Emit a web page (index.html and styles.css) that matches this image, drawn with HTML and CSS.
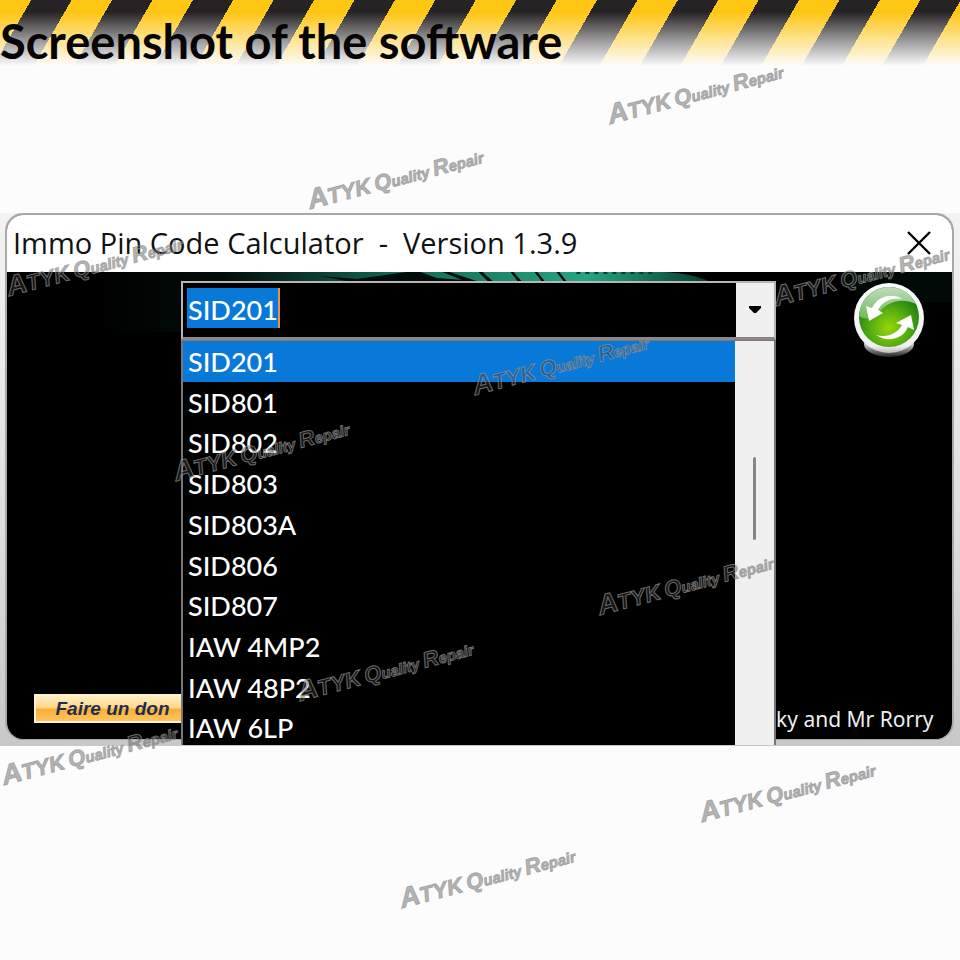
FILE: index.html
```html
<!DOCTYPE html>
<html lang="en">
<head>
<meta charset="utf-8">
<title>Immo Pin Code Calculator</title>
<link rel="stylesheet" href="styles.css">
</head>
<body>
<header class="banner">
  <h1>Screenshot of the software</h1>
</header>
<main class="desktop">
  <section class="window">
    <div class="titlebar">
      <h2>Immo Pin Code Calculator&nbsp; -&nbsp; Version 1.3.9</h2>
      <button class="close" aria-label="Close">
        <svg viewBox="0 0 24 24" width="24" height="24"><path d="M1 1 23 23M23 1 1 23" stroke="#000" stroke-width="2.4" fill="none"/></svg>
      </button>
    </div>
    <div class="client">
      <svg class="glow" viewBox="0 0 946 60" preserveAspectRatio="none" aria-hidden="true">
        <defs>
          <linearGradient id="teal"><stop offset="0" stop-color="#020c0a"/><stop offset=".35" stop-color="#126350"/><stop offset=".75" stop-color="#25a684"/><stop offset="1" stop-color="#063b2e"/></linearGradient>
          <linearGradient id="dim"><stop offset="0" stop-color="#000"/><stop offset=".7" stop-color="#020f0c"/><stop offset="1" stop-color="#010806"/></linearGradient>
        </defs>
        <path d="M90 0H300V60H90Z" fill="url(#dim)"/>
        <path d="M830 0H946V30H860Z" fill="#020a08"/>
        <path d="M215 0H655Q685 1 702 9H215Z" fill="url(#teal)"/>
        <path d="M313 4 350 7 400 0H414L430 6 470 9H340ZM443 0 470 9H458L436 0ZM476 0 486 9H481L472 0ZM507 0 515 9H511L504 0ZM531 0 538 9H535L528 0ZM553 0 560 9H557L550 0Z" fill="#010b09"/>
        <path d="M570 1H650" stroke="#063a2d" stroke-width="2" stroke-dasharray="4 5"/>
      </svg>
      <div class="side side-left">
        <button class="donate">Faire un don</button>
      </div>
      <div class="combo">
        <div class="field">
          <input class="value" type="text" value="SID201" aria-label="Control unit">
          <button class="arrow" aria-label="Show list">
            <svg viewBox="0 0 12 8" width="12" height="8"><path d="M0 0H12V2L7 7H5L0 2Z" fill="#000"/></svg>
          </button>
        </div>
        <div class="popup">
          <ul class="options" role="listbox" aria-label="Control units">
            <li role="option" aria-selected="true">SID201</li>
            <li role="option">SID801</li>
            <li role="option">SID802</li>
            <li role="option">SID803</li>
            <li role="option">SID803A</li>
            <li role="option">SID806</li>
            <li role="option">SID807</li>
            <li role="option">IAW 4MP2</li>
            <li role="option">IAW 48P2</li>
            <li role="option">IAW 6LP</li>
          </ul>
          <div class="track"><div class="thumb"></div></div>
        </div>
      </div>
      <div class="side side-right">
        <button class="refresh" aria-label="Refresh">
          <svg viewBox="0 0 74 78" width="74" height="78">
            <defs>
              <radialGradient id="ball" cx=".5" cy=".68" r=".62"><stop offset="0" stop-color="#9ad60a"/><stop offset=".5" stop-color="#55ae10"/><stop offset="1" stop-color="#187a12"/></radialGradient>
              <linearGradient id="gloss" x2="0" y2="1"><stop offset="0" stop-color="#c3dcc0"/><stop offset="1" stop-color="#6dbb55"/></linearGradient>
              <linearGradient id="rim" x2="0" y2="1"><stop offset="0" stop-color="#fff"/><stop offset=".9" stop-color="#f0f0f0"/><stop offset="1" stop-color="#bbb"/></linearGradient>
              <linearGradient id="base" x2="0" y2="1"><stop offset=".5" stop-color="#ccc"/><stop offset="1" stop-color="#222"/></linearGradient>
            </defs>
            <ellipse cx="37" cy="63" rx="25" ry="13" fill="url(#base)"/>
            <circle cx="37" cy="37" r="35" fill="url(#rim)"/>
            <circle cx="37" cy="36" r="30" fill="url(#ball)"/>
            <path d="M7 35A30 30 0 0 1 64 23C49 16 36 21 28 30 21 37 14 40 7 35Z" fill="url(#gloss)"/>
            <path d="M50 18C39 11 25 16 20 27L14 25 17 40 31 32 26 29C31 20 40 16 50 18Z" fill="#fff"/>
            <path d="M24 54C36 62 51 58 56 46L62 49 59 34 44 42 50 44C45 53 35 57 24 54Z" fill="#fff"/>
          </svg>
        </button>
        <p class="credit">ky and Mr Rorry</p>
      </div>
    </div>
  </section>
</main>
<div class="marks" aria-hidden="true">
  <p class="mark m1"><b>A</b><i>TYK</i> <i>Q</i>uality <i>R</i>epair</p>
  <p class="mark m2"><b>A</b><i>TYK</i> <i>Q</i>uality <i>R</i>epair</p>
  <p class="mark m3"><b>A</b><i>TYK</i> <i>Q</i>uality <i>R</i>epair</p>
  <p class="mark m4"><b>A</b><i>TYK</i> <i>Q</i>uality <i>R</i>epair</p>
  <p class="mark m5"><b>A</b><i>TYK</i> <i>Q</i>uality <i>R</i>epair</p>
  <p class="mark m6"><b>A</b><i>TYK</i> <i>Q</i>uality <i>R</i>epair</p>
  <p class="mark m7"><b>A</b><i>TYK</i> <i>Q</i>uality <i>R</i>epair</p>
  <p class="mark m8"><b>A</b><i>TYK</i> <i>Q</i>uality <i>R</i>epair</p>
  <p class="mark m9"><b>A</b><i>TYK</i> <i>Q</i>uality <i>R</i>epair</p>
  <p class="mark m10"><b>A</b><i>TYK</i> <i>Q</i>uality <i>R</i>epair</p>
  <p class="mark m11"><b>A</b><i>TYK</i> <i>Q</i>uality <i>R</i>epair</p>
</div>
</body>
</html>
```
FILE: styles.css
```css
* { box-sizing: border-box; }
body {
  margin: 0;
  min-height: 100vh;
  position: relative;
  overflow-x: hidden;
  background: #fdfcfd;
  font-family: "Open Sans", "Noto Sans", sans-serif;
}
h1, h2, p, ul { margin: 0; padding: 0; font-weight: 400; }
button { border: 0; padding: 0; background: none; display: block; }
svg { display: block; }

.banner {
  height: 213px;
  padding-top: 11px;
  background:
    linear-gradient(to bottom, rgba(253,252,253,0) 12px, rgba(253,252,253,.5) 38px, #fdfcfd 66px),
    repeating-linear-gradient(120deg, #ffc613 0 27px, #252324 27px 62px, #ffc613 62px 70px);
}
h1 {
  font: 700 47px/60px Lato, sans-serif;
  color: #060405;
  white-space: nowrap;
}

.desktop {
  padding: 0 6px 6px 5px;
  background: linear-gradient(to bottom, #f3f3f3, #dedede 60%, #c9c8c9);
}
.window {
  border: 2px solid #aaa8a9;
  border-bottom-width: 1px;
  border-radius: 18px;
  background: #000;
}
.titlebar {
  height: 57px;
  padding: 0 21px 2px 6px;
  display: flex;
  align-items: center;
  justify-content: space-between;
  background: #fff;
  border-radius: 16px 16px 0 0;
}
h2 { font-size: 29px; line-height: 36px; color: #111; white-space: nowrap; }
.client {
  position: relative;
  height: 467px;
  padding-top: 9px;
  display: grid;
  grid-template-columns: 174px 1fr 176px;
}
.glow { position: absolute; top: 0; left: 0; width: 100%; height: 60px; }
.side { position: relative; display: flex; flex-direction: column; }
.side-left { justify-content: flex-end; align-items: flex-end; padding-bottom: 16px; }
.donate {
  width: 147px;
  height: 29px;
  padding-left: 8px;
  border: 2px solid #fff0ce;
  border-right: 0;
  background: linear-gradient(to bottom, #ffeec4, #ffd687 48%, #fcae35 52%, #ffc45b);
  font: italic 700 19px/24px "Liberation Sans", sans-serif;
  color: #1d2e50;
}
.combo { position: relative; margin-bottom: -7px; }
.field {
  height: 59px;
  display: flex;
  justify-content: space-between;
  background: #000;
  border: 2px solid #b9b5b5;
  border-bottom: 3px solid #8f8685;
}
.value {
  width: 93px;
  height: 40px;
  margin: 5px 0 0 4px;
  padding: 2px 0 0 1px;
  border: 0;
  border-right: 2px solid #e79350;
  background: #0878d9;
  color: #fff;
  font: 500 27px/38px Lato, sans-serif;
}
.arrow {
  width: 38px;
  display: flex;
  align-items: center;
  justify-content: center;
  background: #f0f0f0;
}
.popup {
  height: 405px;
  display: flex;
  overflow: hidden;
  background: #000;
  border: 2px solid #777;
  border-width: 1px 2px 0;
}
.options {
  flex: 1;
  height: 407px;
  display: grid;
  grid-auto-rows: 1fr;
  list-style: none;
  color: #fff;
  font: 500 27px/38px Lato, sans-serif;
}
.options li { padding: 2px 0 0 5px; white-space: nowrap; }
.options li[aria-selected="true"] { background: #0878d9; }
.track { width: 39px; background: #f0f0f0; }
.thumb { width: 3px; height: 83px; margin: 116px auto 0; background: #858585; border-radius: 2px; }
.side-right { justify-content: space-between; align-items: flex-end; padding: 0 16px 4px 0; }
.refresh { margin: 0 10px 0 0; }
.credit {
  width: 100%;
  font: 400 21px/32px "Noto Sans", sans-serif;
  color: #eee;
  white-space: nowrap;
}

.marks { position: absolute; inset: 0; overflow: hidden; pointer-events: none; }
.mark {
  position: absolute;
  transform: rotate(-15deg);
  transform-origin: left bottom;
  font: italic 700 15px/24px "Liberation Sans", sans-serif;
  color: rgba(60,60,60,.4);
  -webkit-text-stroke: 1px rgba(150,150,150,.7);
  white-space: nowrap;
}
.mark b { font-size: 28px; }
.mark i { font-size: 22px; }
.m1 { left: 612px; top: 103px; }
.m2 { left: 312px; top: 188px; }
.m3 { left: 11px; top: 275px; }
.m4 { left: 778px; top: 285px; }
.m5 { left: 477px; top: 374px; }
.m6 { left: 178px; top: 460px; }
.m7 { left: 602px; top: 594px; }
.m8 { left: 302px; top: 680px; }
.m9 { left: 6px; top: 764px; }
.m10 { left: 704px; top: 801px; }
.m11 { left: 404px; top: 887px; }
```
